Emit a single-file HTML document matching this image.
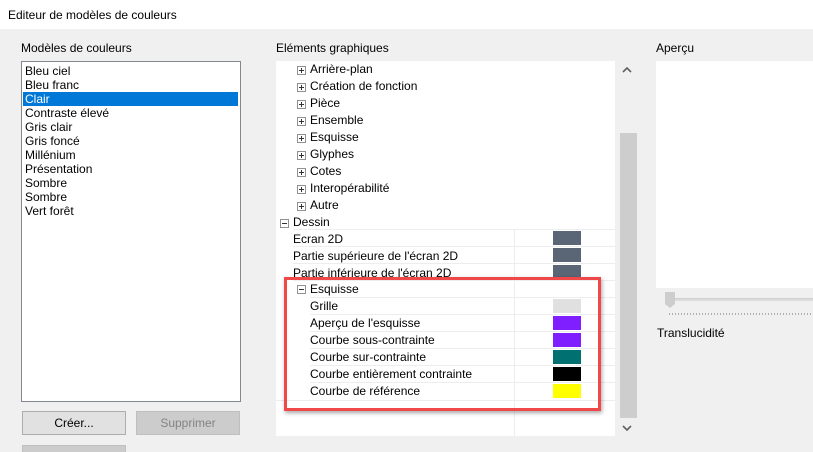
<!DOCTYPE html>
<html><head><meta charset="utf-8"><style>
*{margin:0;padding:0;box-sizing:border-box}
html,body{width:813px;height:452px;overflow:hidden}
body{background:#f0f0f0;font-family:"Liberation Sans",sans-serif;font-size:12px;color:#000;position:relative}
.a{position:absolute;white-space:nowrap}
.title{left:0;top:0;width:813px;height:29px;background:#fff}
.list{left:21px;top:61px;width:220px;height:341px;background:#fff;border:1px solid #828790}
.li{position:absolute;left:3px;height:14px;line-height:14px}
.sel{background:#0078d7;color:#fff;left:1px;width:215px;padding-left:2px}
.btn{height:24px;border:1px solid #adadad;background:#e1e1e1;text-align:center;line-height:22px}
.dis{color:#838383;background:#cccccc;border-color:#bfbfbf}
.tree{left:276px;top:61px;width:339px;height:375px;background:#fff}
.pb{position:absolute;width:9px;height:9px;border:1px solid #919191;background:#fff}
.pb:before{content:"";position:absolute;left:1px;top:3px;width:5px;height:1px;background:#333}
.pb.p:after{content:"";position:absolute;left:3px;top:1px;width:1px;height:5px;background:#333}
.t{position:absolute;height:17px;line-height:18px}
.ln{position:absolute;height:1px;background:#ededed}
.sw{position:absolute;left:277px;width:28px;height:14px}
</style></head><body>
<div class="a title"></div>
<div class="a" style="left:8px;top:8px">Editeur de modèles de couleurs</div>
<div class="a" style="left:21px;top:41px">Modèles de couleurs</div>
<div class="a list">
<div class="li" style="top:2px">Bleu ciel</div>
<div class="li" style="top:16px">Bleu franc</div>
<div class="li sel" style="top:30px">Clair</div>
<div class="li" style="top:44px">Contraste élevé</div>
<div class="li" style="top:58px">Gris clair</div>
<div class="li" style="top:72px">Gris foncé</div>
<div class="li" style="top:86px">Millénium</div>
<div class="li" style="top:100px">Présentation</div>
<div class="li" style="top:114px">Sombre</div>
<div class="li" style="top:128px">Sombre</div>
<div class="li" style="top:142px">Vert forêt</div>
</div>
<div class="a btn" style="left:22px;top:411px;width:104px">Créer...</div>
<div class="a btn dis" style="left:136px;top:411px;width:104px">Supprimer</div>
<div class="a btn dis" style="left:22px;top:445px;width:104px"></div>

<div class="a" style="left:276px;top:41px">Eléments graphiques</div>
<div class="a tree">
<div class="pb p" style="left:21px;top:5px"></div><div class="t" style="left:34px;top:-1px">Arrière-plan</div>
<div class="pb p" style="left:21px;top:22px"></div><div class="t" style="left:34px;top:16px">Création de fonction</div>
<div class="pb p" style="left:21px;top:39px"></div><div class="t" style="left:34px;top:33px">Pièce</div>
<div class="pb p" style="left:21px;top:56px"></div><div class="t" style="left:34px;top:50px">Ensemble</div>
<div class="pb p" style="left:21px;top:73px"></div><div class="t" style="left:34px;top:67px">Esquisse</div>
<div class="pb p" style="left:21px;top:90px"></div><div class="t" style="left:34px;top:84px">Glyphes</div>
<div class="pb p" style="left:21px;top:107px"></div><div class="t" style="left:34px;top:101px">Cotes</div>
<div class="pb p" style="left:21px;top:124px"></div><div class="t" style="left:34px;top:118px">Interopérabilité</div>
<div class="pb p" style="left:21px;top:141px"></div><div class="t" style="left:34px;top:135px">Autre</div>
<div class="pb" style="left:4px;top:158px"></div><div class="t" style="left:17px;top:152px">Dessin</div>
<div class="ln" style="left:17px;width:322px;top:168px"></div>
<div style="position:absolute;left:238px;top:169px;width:1px;height:206px;background:#ededed"></div>
<div class="t" style="left:17px;top:169px">Ecran 2D</div><div class="sw" style="top:170px;background:#5a6576"></div>
<div class="ln" style="left:17px;width:322px;top:185px"></div>
<div class="t" style="left:17px;top:186px">Partie supérieure de l'écran 2D</div><div class="sw" style="top:187px;background:#5a6576"></div>
<div class="ln" style="left:17px;width:322px;top:202px"></div>
<div class="t" style="left:17px;top:203px">Partie inférieure de l'écran 2D</div><div class="sw" style="top:204px;background:#5a6576"></div>
<div class="ln" style="left:17px;width:322px;top:219px"></div>
<div class="pb" style="left:21px;top:224px"></div><div class="t" style="left:34px;top:219px">Esquisse</div>
<div class="ln" style="left:34px;width:305px;top:236px"></div>
<div class="t" style="left:34px;top:236px">Grille</div><div class="sw" style="top:238px;background:#e0e0e0"></div>
<div class="ln" style="left:34px;width:305px;top:253px"></div>
<div class="t" style="left:34px;top:253px">Aperçu de l'esquisse</div><div class="sw" style="top:255px;background:#7f1fff"></div>
<div class="ln" style="left:34px;width:305px;top:270px"></div>
<div class="t" style="left:34px;top:270px">Courbe sous-contrainte</div><div class="sw" style="top:272px;background:#7f1fff"></div>
<div class="ln" style="left:34px;width:305px;top:287px"></div>
<div class="t" style="left:34px;top:287px">Courbe sur-contrainte</div><div class="sw" style="top:289px;background:#007070"></div>
<div class="ln" style="left:34px;width:305px;top:304px"></div>
<div class="t" style="left:34px;top:304px">Courbe entièrement contrainte</div><div class="sw" style="top:306px;background:#000"></div>
<div class="ln" style="left:34px;width:305px;top:321px"></div>
<div class="t" style="left:34px;top:321px">Courbe de référence</div><div class="sw" style="top:323px;background:#ffff00"></div>
<div class="ln" style="left:0;width:339px;top:339px"></div>
</div>
<div class="a" style="left:615px;top:61px;width:22px;height:375px;background:#f0f0f0"></div>
<div class="a" style="left:620px;top:133px;width:17px;height:285px;background:#cdcdcd"></div>
<svg class="a" style="left:622px;top:66px" width="10" height="8"><path d="M1 6 L5 2 L9 6" fill="none" stroke="#606060" stroke-width="1.6"/></svg>
<svg class="a" style="left:622px;top:424px" width="10" height="8"><path d="M1 2 L5 6 L9 2" fill="none" stroke="#606060" stroke-width="1.6"/></svg>
<div class="a" style="left:284px;top:277px;width:317px;height:134px;border:3px solid #f04848;box-shadow:1px 2px 4px rgba(0,0,0,.35)"></div>

<div class="a" style="left:656px;top:41px">Aperçu</div>
<div class="a" style="left:656px;top:61px;width:157px;height:227px;background:#fff"></div>
<div class="a" style="left:665px;top:298px;width:148px;height:3px;background:#dcdcdc;border-top:1px solid #d0d0d0"></div>
<div class="a" style="left:665px;top:292px;width:10px;height:16px;background:#cdcdcd;clip-path:polygon(0 0,100% 0,100% 75%,50% 100%,0 75%)"></div>
<div class="a" style="left:669px;top:313px;width:144px;height:2px;background:repeating-linear-gradient(90deg,#b0b0b0 0 1px,transparent 1px 3px)"></div>
<div class="a" style="left:657px;top:326px">Translucidité</div>
</body></html>
